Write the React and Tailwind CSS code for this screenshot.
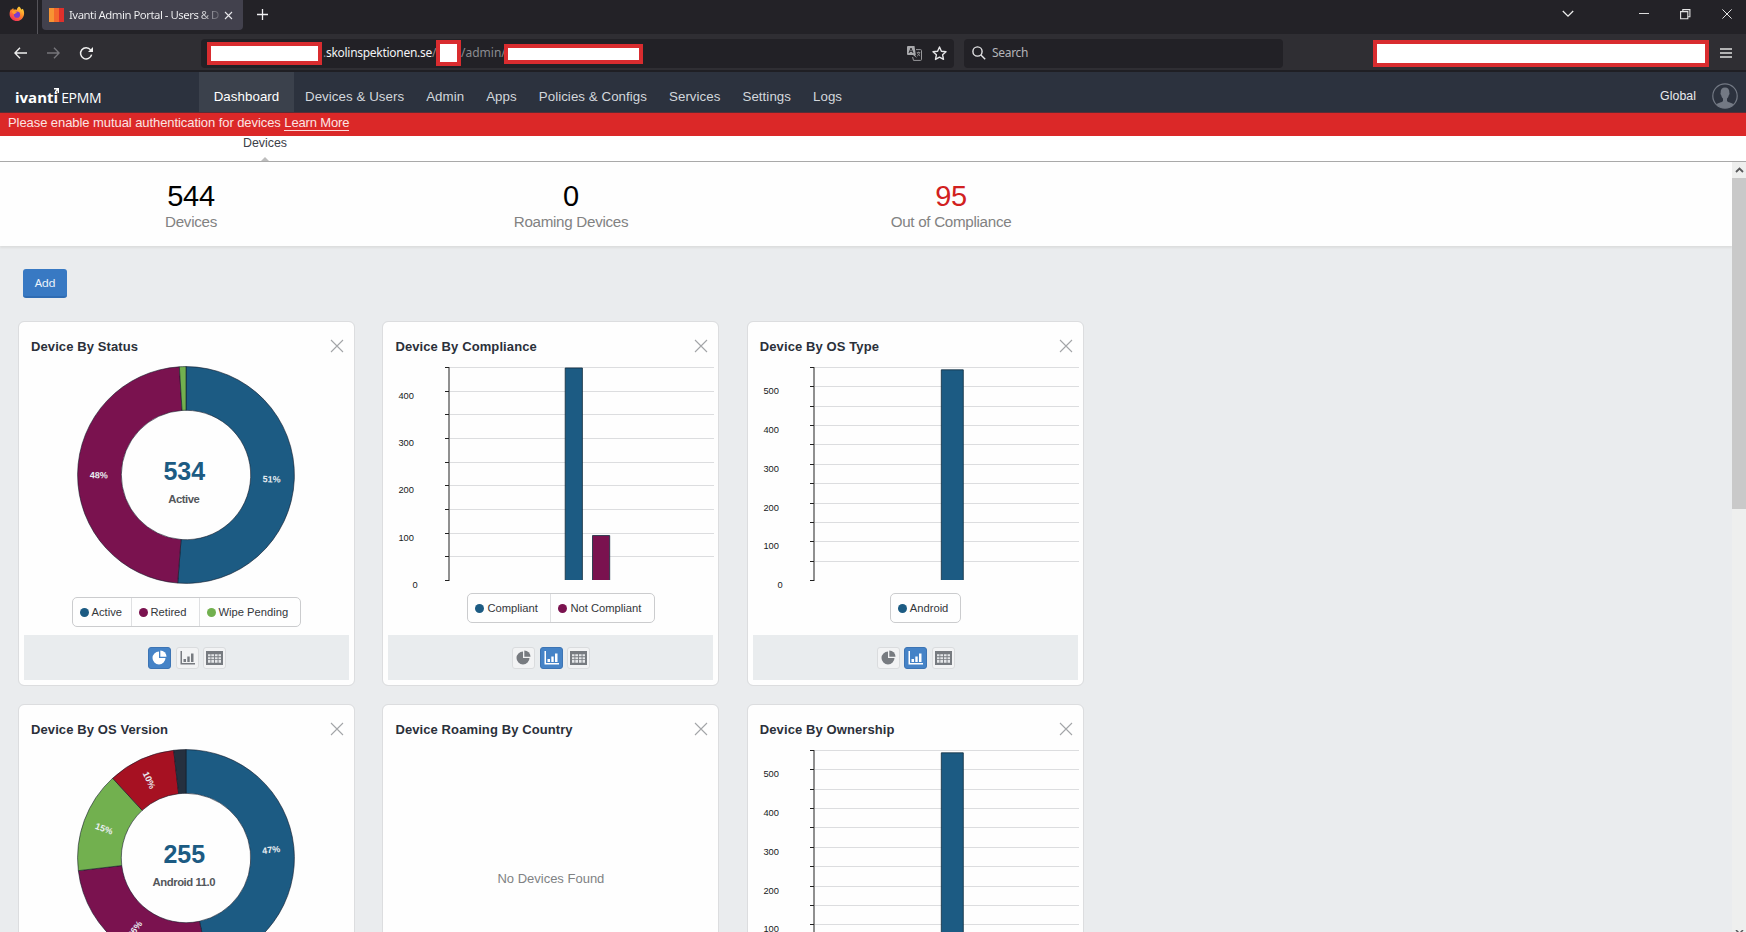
import { useState } from "react";

const BLUE = "#1c5b83";
const PURPLE = "#7a124f";
const GREEN = "#72b04f";
const RED = "#a61122";
const NAVY = "#25303f";

const NAV = ["Devices & Users", "Admin", "Apps", "Policies & Configs", "Services", "Settings", "Logs"];

const STATS = [
  { value: 544, label: "Devices" },
  { value: 0, label: "Roaming Devices" },
  { value: 95, label: "Out of Compliance", alert: true },
];

const STATUS = [
  { from: 0, to: 184.4, color: BLUE, label: "51%" },
  { from: 184.4, to: 356.5, color: PURPLE, label: "48%" },
  { from: 356.5, to: 360, color: GREEN },
];

const OS_VERSION = [
  { from: 0, to: 168, color: BLUE, label: "47%" },
  { from: 168, to: 263.3, color: PURPLE, label: "26%" },
  { from: 263.3, to: 317.4, color: GREEN, label: "15%" },
  { from: 317.4, to: 353.5, color: RED, label: "10%" },
  { from: 353.5, to: 360, color: NAVY },
];

export default function App() {
  return (
    <div className="flex h-[932px] w-[1746px] flex-col overflow-hidden bg-[#eaecee] font-['Liberation_Sans',Arial,sans-serif]">
      <TabStrip />
      <Toolbar />
      <NavBar />
      <div className="h-[23px] shrink-0 bg-[#db2828] pl-2 text-[13px] leading-[20px] text-[#fbe4e4]">
        <span className="tracking-[-0.07px]">Please enable mutual authentication for devices </span>
        <a className="inline-block border-b border-[#fbdcdc] leading-[15px] tracking-[-0.15px]">Learn More</a>
      </div>
      <div className="flex h-[26px] shrink-0 flex-col justify-between border-b border-[#a9a9a9] bg-white pl-[243px]">
        <span className="text-[12.4px] leading-[14px] text-[#3c4048]">Devices</span>
        <svg className="ml-[18px]" width="8" height="4"><path d="M0 4 4 0l4 4z" fill="#bdbdbd" /></svg>
      </div>
      <div className="flex min-h-0 flex-1">
        <Dashboard />
        <Scrollbar />
      </div>
    </div>
  );
}

function TabStrip() {
  return (
    <div className="flex h-[34px] shrink-0 items-start bg-[#232227]">
      <div className="flex h-[34px] w-[38px] items-start justify-center border-r border-[#55545a] pt-[6px] pr-[3px]">
        <FirefoxIcon />
      </div>
      <div className="ml-1 flex h-[30px] w-[201px] items-center rounded-b-[4px] bg-[#42414d] pl-[7px] pr-[10px]">
        <div className="flex h-[14px] w-[15px] shrink-0">
          <div className="w-[5px] bg-[#f79433]" />
          <div className="w-[5px] bg-[#f4682c]" />
          <div className="w-[5px] bg-[#e0302c]" />
        </div>
        <div className="ml-[5px] w-[154px] overflow-hidden whitespace-nowrap bg-linear-to-r from-[#f4f4f6] from-85% to-[#4c4b56] bg-clip-text font-['Noto_Sans',sans-serif] text-[11.4px] leading-[20px] tracking-[-0.5px] text-transparent">
          Ivanti Admin Portal - Users & D
        </div>
        <svg className="ml-[1px] shrink-0" width="9" height="9" stroke="#e8e8ec" strokeWidth="1.1"><path d="M1 1l7 7M8 1 1 8" /></svg>
      </div>
      <svg className="ml-[14px] mt-[9px]" width="11" height="11" stroke="#f0f0f2" strokeWidth="1.3"><path d="M5.5 0v11M0 5.5h11" /></svg>
      <svg className="ml-auto mt-[10px]" width="12" height="8" fill="none" stroke="#eee" strokeWidth="1.3"><path d="m.8 1 5.2 5.2L11.2 1" /></svg>
      <svg className="ml-[65px] mt-[13px]" width="10" height="2"><path d="M0 .5h10" stroke="#ddd" /></svg>
      <svg className="ml-[31px] mt-[9px]" width="11" height="11" fill="none" stroke="#e4e4e4" strokeWidth="1.1">
        <path d="M.6 2.6h7.2v7.2H.6zM2.8 2.6V.6h7.1v7.1H7.8" />
      </svg>
      <svg className="ml-[31px] mr-[14px] mt-[9px]" width="10" height="10" stroke="#e4e4e4"><path d="m.4.4 9.2 9.2M9.6.4.4 9.6" /></svg>
    </div>
  );
}

function FirefoxIcon() {
  return (
    <svg width="16" height="16" viewBox="0 0 16 16">
      <defs>
        <linearGradient id="fx" x1="0.8" y1="0" x2="0.2" y2="1">
          <stop offset="0" stopColor="#ffe03a" />
          <stop offset="0.45" stopColor="#ff8a2a" />
          <stop offset="1" stopColor="#f0245f" />
        </linearGradient>
      </defs>
      <path
        d="M10 .4c1.4 1 2 2 2.1 3 .9-.1 1.500-.5 1.700-.7 1 1.500 1.400 3.200 1.300 5.100-.2 4-3.300 7.300-7.200 7.300S.7 12 .6 8.200C.5 6 1.200 4.200 2.200 3l.4 1.100c.5-1.100 1.200-1.800 1.700-2.100-.1.800.2 1.500.5 1.800 1.100-.3 2.200-.2 3 .1C7.900 2.400 8.700 1.200 10 .4z"
        fill="url(#fx)"
      />
      <circle cx="8" cy="8.7" r="3.1" fill="#7a3bd0" />
      <path d="M2.800 5.400c1.500-1 3-.6 3.700.1.800.1 1.500.4 1.700.8-.9.300-1.700.8-2.200 1.600-1 .2-2.400-.5-3.200-2.500z" fill="#ff9a2e" />
    </svg>
  );
}

// blanked-out part of the browser chrome
function Redacted({ className }) {
  return <div className={`shrink-0 border-[#d92c2f] bg-white ${className}`} />;
}

function Toolbar() {
  return (
    <div className="flex h-[38px] shrink-0 items-center border-b-2 border-[#1f1f24] bg-[#2f2e33] pt-[2px]">
      <svg className="ml-[14px]" width="13" height="12" fill="none" stroke="#f0f0f0" strokeWidth="1.4"><path d="M13 6H1M6 .8.9 6 6 11.200" /></svg>
      <svg className="ml-[20px]" width="13" height="12" fill="none" stroke="#77767b" strokeWidth="1.4"><path d="M0 6h12M7 .8 12.100 6 7 11.200" /></svg>
      <svg className="ml-[19px]" width="15" height="15" viewBox="0 0 15 15" fill="none" stroke="#f0f0f0" strokeWidth="1.5">
        <path d="M12.600 8.600A5.600 5.600 0 1 1 11.600 3.900" />
        <path d="M14 1v5H9z" fill="#f0f0f0" stroke="none" />
      </svg>
      <div className="ml-[107px] flex h-[29px] w-[753px] items-center rounded-[4px] bg-[#222126] pl-[6px] font-['Noto_Sans',sans-serif] text-[12px] whitespace-nowrap text-[#8b8b90]">
        <Redacted className="mt-[1px] h-[23px] w-[115px] border-4" />
        <span className="w-[114px] pl-px tracking-[-0.28px]">
          .<span className="text-[#f2f2f4]">skolinspektionen.se</span>/
        </span>
        <Redacted className="h-[26px] w-[25px] border-4" />
        <span className="w-[43px]">/admin/</span>
        <Redacted className="mt-[2px] h-[20px] w-[139px] border-4" />
        <TranslateIcon />
        <svg className="ml-[10px]" width="15" height="15" viewBox="0 0 15 15" fill="none" stroke="#e6e6e8" strokeWidth="1.4" strokeLinejoin="round">
          <path d="m7.500 1 1.900 4.200 4.600.5-3.400 3.100.9 4.600-4-2.300-4 2.300.9-4.600L1 5.700l4.600-.5z" />
        </svg>
      </div>
      <div className="ml-[10px] flex h-[29px] w-[319px] items-center rounded-[4px] bg-[#222126] pl-2">
        <svg width="14" height="14" fill="none" stroke="#e6e6e8" strokeWidth="1.4"><circle cx="5.5" cy="5.5" r="4.6" /><path d="m8.900 8.900 4.300 4.300" /></svg>
        <span className="ml-[6px] font-['Noto_Sans',sans-serif] text-[12px] tracking-[-0.3px] text-[#b4b4b8]">Search</span>
      </div>
      <Redacted className="ml-[90px] h-[27px] w-[336px] border-[4.5px]" />
      <svg className="ml-[11px] -mt-[1px]" width="12" height="10" stroke="#e0e0e0" strokeWidth="1.3"><path d="M0 1h12M0 5h12M0 9h12" /></svg>
    </div>
  );
}

function TranslateIcon() {
  return (
    <svg className="ml-[264px]" width="15" height="15" viewBox="0 0 15 15" fill="none">
      <path d="M1 0h6.500l1.300 9H8l2 3-4-3H1a1 1 0 0 1-1-1V1a1 1 0 0 1 1-1z" fill="#a9a9ac" />
      <path d="M2 7 4 2l2 5M2.700 5.400h2.600" stroke="#2a292e" />
      <path d="M9 3.600h4.500a1 1 0 0 1 1 1v8.800a1 1 0 0 1-1 1H6.500L5.600 11" stroke="#98989b" />
      <path d="M9.800 6.500h3.400M11.600 5.600v.9M12.700 6.600c-.3 1.600-1.300 2.800-2.600 3.500M10.500 7c.4 1.300 1.400 2.400 2.600 3" stroke="#98989b" strokeWidth=".8" />
    </svg>
  );
}

function NavBar() {
  return (
    <div className="flex h-[41px] shrink-0 border-b border-[#5a2c35] bg-[#2c323e] text-[13.3px] leading-[49px] tracking-[0.06px] text-[#d3d7dc]">
      <div className="flex w-[199px] items-baseline pl-[15px] leading-[51px] text-white">
        <span className="relative font-['Open_Sans',sans-serif] text-[15px] font-bold tracking-[0px]">
          ivanti
          <svg className="absolute -right-[1px] top-[16px]" width="5" height="5"><path d="M0 0h5v5H3.600V2.400L1 5V3.200L2.500 1.500H0z" fill="#fff" /></svg>
        </span>
        <span className="ml-[3px] font-['Open_Sans',sans-serif] text-[14px] tracking-[-0.3px]">EPMM</span>
      </div>
      <a className="w-[95px] bg-[#3b414c] text-center text-white">Dashboard</a>
      {NAV.map((item) => (
        <a key={item} className="px-[11px] whitespace-nowrap">{item}</a>
      ))}
      <span className="ml-auto text-[12.3px] text-[#e8eaed]">Global</span>
      <svg className="ml-[16px] mr-2 mt-[11px]" width="26" height="26" viewBox="0 0 26 26">
        <circle cx="13" cy="13" r="12.2" fill="none" stroke="#737984" strokeWidth="1.2" />
        <path d="M13 4.500c-3.200 0-4.500 2.200-4.300 5.200-.5.600-.1 2 .5 2.600.3 1.500 1 2.500 1.800 3.300v2.300c-1 1.500-4.600 1.600-6.600 3.500a12 12 0 0 0 17.200 0c-2-1.900-5.600-2-6.600-3.500v-2.300c.8-.8 1.500-1.800 1.800-3.300.6-.6 1-2 .5-2.600.2-3-1.100-5.200-4.300-5.200z" fill="#737984" />
      </svg>
    </div>
  );
}

function Dashboard() {
  return (
    <div className="w-[1732px] overflow-hidden">
      <div className="flex h-[84px] bg-[#fefefe] pl-[1px] shadow-[0_2px_2px_#dcdddd]">
        {STATS.map((s) => (
          <div key={s.label} className="w-[380px] pt-[17px] text-center">
            <div className={`text-[29px] leading-[34px] tracking-[-0.3px] ${s.alert ? "text-[#d12020]" : "text-black"}`}>{s.value}</div>
            <div className="text-[15.2px] leading-[18px] tracking-[-0.3px] text-[#828282]">{s.label}</div>
          </div>
        ))}
      </div>
      <button className="ml-[23px] mt-[23px] flex h-[29px] w-[44px] items-center justify-center rounded-[3px] border-b-2 border-[#2f6cb3] bg-[#3879c3] font-['Noto_Sans',sans-serif] text-[11.5px] tracking-[-0.3px] text-[#eef5fc]">
        Add
      </button>
      <div className="ml-[18px] mt-[23px] grid grid-cols-[repeat(3,337px)] gap-x-[27.4px] gap-y-[18px]">
        <Card title="Device By Status" view="pie">
          <Donut slices={STATUS} value="534" name="Active" nameWidth={31.5} />
          <Legend
            className="top-[275px] left-[52.5px]"
            items={[
              { name: "Active", color: BLUE, box: "w-[59px]" },
              { name: "Retired", color: PURPLE, box: "w-[68px]" },
              { name: "Wipe Pending", color: GREEN, box: "w-[100.5px]" },
            ]}
          />
        </Card>
        <Card title="Device By Compliance" view="bar">
          <BarChart steps={9} bars={[{ x: 181.7, w: 18.2, v: 449, color: BLUE }, { x: 209, w: 18.2, v: 95, color: PURPLE }]} />
          <Legend
            className="top-[271px] left-[84px]"
            items={[
              { name: "Compliant", color: BLUE, box: "w-[83px]" },
              { name: "Not Compliant", color: PURPLE, box: "w-[103px]" },
            ]}
          />
        </Card>
        <Card title="Device By OS Type" view="bar">
          <BarChart steps={11} bars={[{ x: 192.8, w: 23, v: 544, color: BLUE }]} />
          <Legend className="top-[271px] left-[142px]" items={[{ name: "Android", color: BLUE, box: "w-[69px]" }]} />
        </Card>
        <Card title="Device By OS Version" view="pie">
          <Donut slices={OS_VERSION} value="255" name="Android 11.0" nameWidth={63} />
        </Card>
        <Card title="Device Roaming By Country" view="table">
          <div className="absolute inset-x-0 top-[166px] text-center text-[13px] leading-[16px] text-[#808284]">No Devices Found</div>
        </Card>
        <Card title="Device By Ownership" view="bar">
          <BarChart steps={11} bars={[{ x: 192.8, w: 23, v: 544, color: BLUE }]} />
        </Card>
      </div>
    </div>
  );
}

function Card({ title, view: initial, children }) {
  const [view, setView] = useState(initial);
  return (
    <section className="relative flex h-[365px] flex-col rounded-[6px] border border-[#dcdddf] bg-[#fefefe] bg-clip-padding">
      <header className="flex items-start justify-between pl-[12px] pr-[10px] pt-[17px]">
        <h2 className="text-[13px] leading-[16px] font-bold tracking-[0.1px] text-[#2b303a]">{title}</h2>
        <svg width="14" height="14" stroke="#a3a5a8" strokeWidth="1.1"><path d="m1 1 12 12M13 1 1 13" /></svg>
      </header>
      {children}
      <footer className="mx-[5px] mb-[5px] mt-auto flex h-[45px] items-center justify-center gap-[4.5px] bg-[#e9ecee] pl-px">
        <ViewButton active={view === "pie"} onClick={() => setView("pie")}>
          <path d="M7 1.500A6.500 6.500 0 1 0 13.500 8H7z" />
          <path d="M8.300.500a6.300 6.300 0 0 1 6.200 6.200H8.300z" />
        </ViewButton>
        <ViewButton active={view === "bar"} onClick={() => setView("bar")}>
          <path d="M.5 1H2v12h13v1.500H.5zM3.500 9H6v3H3.500zM7.300 6.500h2.400V12H7.300zM11 3.500h2.500V12H11z" />
        </ViewButton>
        <ViewButton active={view === "table"} onClick={() => setView("table")}>
          <path d="M-1 1h17v14H-1z" />
          <path d="M1 4.300h2.500v2H1zM4.300 4.300h2.700v2H4.300zM7.900 4.300h2.700v2H7.900zM11.500 4.300H14v2h-2.500zM1 7.200h2.500v2H1zM4.300 7.200h2.700v2H4.300zM7.900 7.200h2.700v2H7.900zM11.500 7.200H14v2h-2.500zM1 10.100h2.500v2.700H1zM4.300 10.100h2.700v2.700H4.300zM7.900 10.100h2.700v2.700H7.900zM11.500 10.100H14v2.700h-2.500z" fill="#e4e6e8" />
        </ViewButton>
      </footer>
    </section>
  );
}

function ViewButton({ active, onClick, children }) {
  return (
    <button
      onClick={onClick}
      className={`grid h-[22px] w-[23px] place-items-center rounded-[3px] border ${
        active ? "border-[#3c74b4] bg-[#4583c7] text-white" : "border-[#dadcde] bg-[#f2f3f4] text-[#777b80]"
      }`}
    >
      <svg width="15" height="15" viewBox="0 0 15 15" fill="currentColor" overflow="visible">{children}</svg>
    </button>
  );
}

function polar(r, deg) {
  const a = ((deg - 90) * Math.PI) / 180;
  return [r * Math.cos(a), r * Math.sin(a)];
}

function ring(from, to, R = 108.4, r = 64.7) {
  const big = to - from > 180 ? 1 : 0;
  return `M${polar(R, from)}A${R} ${R} 0 ${big} 1 ${polar(R, to)}L${polar(r, to)}A${r} ${r} 0 ${big} 0 ${polar(r, from)}Z`;
}

function Donut({ slices, value, name, nameWidth }) {
  return (
    <svg className="ml-[57px] mt-[9.8px] shrink-0" width="220" height="220" viewBox="-110 -110 220 220" textAnchor="middle" fontWeight="bold">
      {slices.map((s) => (
        <path key={s.from} d={ring(s.from, s.to)} fill={s.color} stroke="#111827" strokeOpacity=".65" strokeWidth=".9" />
      ))}
      {slices.filter((s) => s.label).map((s) => {
        const mid = (s.from + s.to) / 2;
        const [x, y] = polar(86.5, mid);
        const turn = mid < 180 ? mid - 90 : mid - 270;
        return (
          <text key={s.label} transform={`translate(${x - 0.8} ${y + 0.8}) rotate(${turn})`} y="3.2" fontSize="9" fill="#e9eef2">{s.label}</text>
        );
      })}
      <text x="-1.7" y="4.5" fontSize="25" fill={BLUE}>{value}</text>
      <text x="-2" y="28.3" fontSize="11.3" fill="#54575b" textLength={nameWidth}>{name}</text>
    </svg>
  );
}

function BarChart({ steps, bars }) {
  const top = 10;
  const height = 213;
  const gap = height / steps;
  const bottom = top + height;
  const ticks = Array.from({ length: steps + 1 }, (_, i) => i);
  return (
    <svg className="mt-[2px] shrink-0" width="333" height="235" fontSize="9.3" fill="#17191c" textAnchor="middle">
      {ticks.map((i) => {
        const y = Math.round(bottom - i * gap) + 0.5;
        return (
          <g key={i}>
            {i > 0 && <path d={`M67 ${y}H331`} stroke="#dcdddf" />}
            <path d={`M62 ${y}h4`} stroke="#222" />
            {i % 2 === 0 && <text x={i ? 23.2 : 32.2} y={y + 7.6}>{i * 50}</text>}
          </g>
        );
      })}
      <path d={`M66 ${top}V${bottom + 1}`} stroke="#222" />
      {bars.map((b) => {
        const h = (b.v / (steps * 50)) * height;
        return <path key={b.x} d={`M${b.x + 0.5} ${bottom}V${bottom - h + 0.5}h${b.w - 1}V${bottom}`} fill={b.color} stroke="#122c3d" strokeOpacity=".8" />;
      })}
    </svg>
  );
}

// overlaps the bottom edge of the chart
function Legend({ items, className }) {
  return (
    <div className={`absolute flex h-[30px] divide-x divide-[#dfe0e2] rounded-[5px] border border-[#cbccce] ${className}`}>
      {items.map((it) => (
        <div key={it.name} className={`flex items-center pl-[7px] text-[11.2px] whitespace-nowrap text-[#34373b] ${it.box}`}>
          <svg className="mr-[3px] shrink-0" width="9" height="9"><circle cx="4.5" cy="4.5" r="4.5" fill={it.color} /></svg>
          {it.name}
        </div>
      ))}
    </div>
  );
}

function Scrollbar() {
  return (
    <div className="flex w-[14px] flex-col items-center bg-[#eeefee]">
      <div className="grid h-4 w-full place-items-center">
        <svg width="9" height="6" fill="none" stroke="#58595b" strokeWidth="1.8"><path d="m1 5 3.500-3.500L8 5" /></svg>
      </div>
      <div className="h-[331px] w-full bg-[#c9c9c9]" />
      <svg className="mt-auto" width="9" height="2" fill="none" stroke="#58595b" strokeWidth="1.5"><path d="m1 0 3.500 3.500L8 0" /></svg>
    </div>
  );
}
